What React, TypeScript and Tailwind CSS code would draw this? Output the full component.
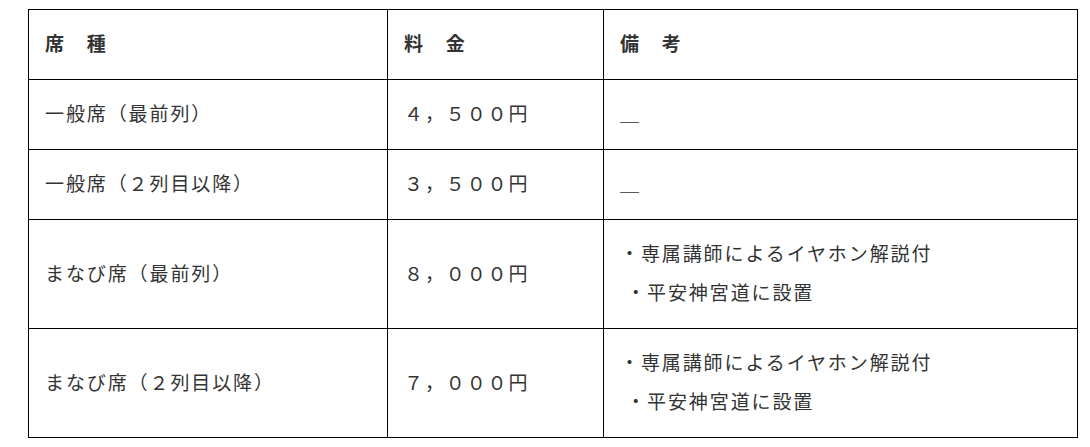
import React from 'react';

interface Row {
  seat: string;
  price: string;
  notes: string[];
}

const rows: Row[] = [
  { seat: '一般席（最前列）', price: '４，５００円', notes: ['＿'] },
  { seat: '一般席（２列目以降）', price: '３，５００円', notes: ['＿'] },
  {
    seat: 'まなび席（最前列）',
    price: '８，０００円',
    notes: ['・専属講師によるイヤホン解説付', ' ・平安神宮道に設置'],
  },
  {
    seat: 'まなび席（２列目以降）',
    price: '７，０００円',
    notes: ['・専属講師によるイヤホン解説付', ' ・平安神宮道に設置'],
  },
];

// text in the reference sits ~2px above center, so padding is uneven
const cell = 'border border-black px-4 pt-[13px] pb-[17px] align-middle text-left';

const App: React.FC = () => {
  return (
    <div
      className="w-[1090px] h-[447px] bg-white pt-[9px] pl-[28px] text-[#333] text-[19px] leading-[39px] tracking-[0.1em]"
      style={{ fontFamily: '"Noto Sans CJK JP", "Noto Sans", sans-serif' }}
    >
      <table className="border-collapse w-[1050px] table-fixed">
        <colgroup>
          <col className="w-[359px]" />
          <col className="w-[216px]" />
          <col />
        </colgroup>
        <thead>
          <tr>
            <th className={`${cell} font-bold`}>席　種</th>
            <th className={`${cell} font-bold`}>料　金</th>
            <th className={`${cell} font-bold`}>備　考</th>
          </tr>
        </thead>
        <tbody>
          {rows.map((r) => (
            <tr key={r.seat}>
              <td className={`${cell} font-normal`}>{r.seat}</td>
              <td className={`${cell} font-normal`}>{r.price}</td>
              <td className={`${cell} font-normal whitespace-pre`}>
                {r.notes.map((n) => (
                  <div key={n}>{n}</div>
                ))}
              </td>
            </tr>
          ))}
        </tbody>
      </table>
    </div>
  );
};

export default App;
